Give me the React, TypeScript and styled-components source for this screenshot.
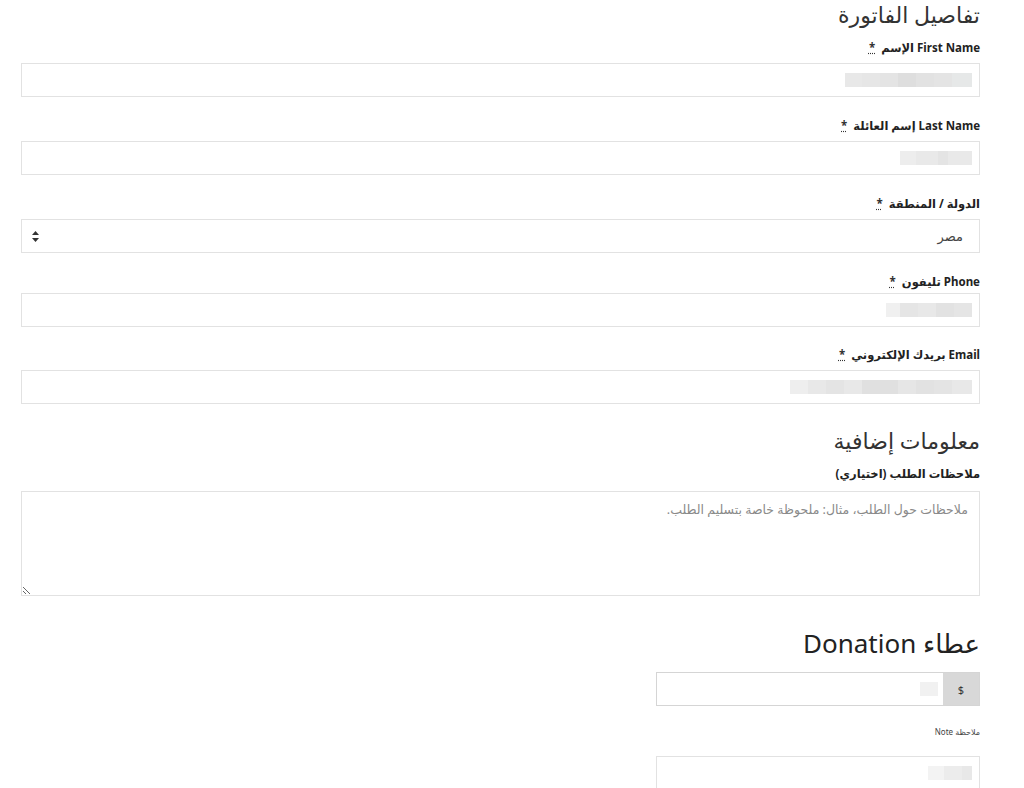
import React from 'react'
import styled, { createGlobalStyle } from 'styled-components'

const GlobalStyle = createGlobalStyle`
  html, body {
    margin: 0;
    padding: 0;
    background: #fff;
  }
  body {
    font-family: 'Noto Sans', 'DejaVu Sans', sans-serif;
    color: #333;
  }
  * { box-sizing: border-box; }
`

const Page = styled.div`
  direction: rtl;
  width: 1024px;
  height: 788px;
  overflow: hidden;
  padding: 0 44px 0 21px;
`

type TitleProps = { big?: boolean, after: number }

const SectionTitle = styled.h3`
  margin: 0 0 ${ (props: TitleProps) => props.after + 'px' };
  font-size: ${ (props: TitleProps) => props.big ? '26px' : '22px' };
  line-height: ${ (props: TitleProps) => props.big ? '38px' : '28px' };
  font-weight: 400;
  color: ${ (props: TitleProps) => props.big ? '#222' : '#333' };
`

const Row = styled.div`
  display: flex;
  flex-direction: column;
  margin-bottom: ${ (props: { gap?: number }) => (props.gap ?? 21) + 'px' };
`

const Label = styled.label`
  display: block;
  font-size: 11.5px;
  line-height: 16px;
  font-weight: 700;
  color: #222;
  margin-bottom: ${ (props: { space?: number }) => (props.space ?? 7) + 'px' };
  abbr {
    text-decoration: underline dotted;
    margin-right: 3px;
    color: #333;
  }
`

const Field = styled.div`
  display: flex;
  align-items: center;
  height: 34px;
  padding: 0 7px;
  border: 1px solid #e2e2e2;
  background: #fff;
  font-size: 13px;
  color: #555;
`

type RedactedProps = { w: number, shade?: string }

const Redacted = styled.span`
  display: inline-block;
  height: 14px;
  width: ${ (props: RedactedProps) => props.w + 'px' };
  background: ${ (props: RedactedProps) => props.shade ?? '#e5e5e5' };
`

const SelectBox = styled(Field)`
  justify-content: space-between;
  padding: 0 16px 0 10px;
  color: #444;
`

const NoteArea = styled.textarea`
  display: block;
  width: 100%;
  height: 105px;
  border: 1px solid #e2e2e2;
  padding: 9px 11px;
  font-family: 'Noto Sans', 'DejaVu Sans', sans-serif;
  font-size: 12.5px;
  direction: rtl;
  resize: vertical;
  outline: none;
  &::placeholder { color: #8a8a8a; }
`

const Narrow = styled.div`
  width: 324px;
`

const Group = styled.div`
  display: flex;
  height: 34px;
  border: 1px solid #d5d5d5;
`

const Addon = styled.span`
  width: 36px;
  display: flex;
  align-items: center;
  justify-content: center;
  background: #d8d8d8;
  font-size: 11px;
  color: #333;
`

const GroupInput = styled.div`
  flex: 1;
  display: flex;
  align-items: center;
  padding: 0 5px;
  background: #fff;
`

const TinyLabel = styled.div`
  font-size: 8px;
  line-height: 12px;
  color: #444;
  margin: 20px 0 18px;
`

const Bars = ({ parts }: { parts: [number, string][] }) => (
  <>
    { parts.map(([w, c], i) => <Redacted key={ i } w={ w } shade={ c } />) }
  </>
)

const Star = () => <abbr title="مطلوب">*</abbr>

export default function App() {
  return (
    <Page>
      <GlobalStyle />
      <SectionTitle after={ 12 }>تفاصيل الفاتورة</SectionTitle>

      <Row>
        <Label>First Name الإسم <Star /></Label>
        <Field>
          <Bars parts={ [[20, '#e6e8e8'], [18, '#e4e4e4'], [18, '#e2e2e2'], [18, '#dedede'], [18, '#e4e4e4'], [18, '#e6e6e6'], [17, '#e8e8e8']] } />
        </Field>
      </Row>

      <Row>
        <Label>Last Name إسم العائلة <Star /></Label>
        <Field>
          <Bars parts={ [[24, '#e9e9e9'], [10, '#e4e4e4'], [22, '#e9e9e9'], [16, '#ededed']] } />
        </Field>
      </Row>

      <Row>
        <Label>الدولة / المنطقة <Star /></Label>
        <SelectBox>
          <span>مصر</span>
          <svg width="7" height="11" viewBox="0 0 7 11">
            <path d="M3.5 0 L7 4 L0 4 Z M3.5 11 L7 7 L0 7 Z" fill="#333" />
          </svg>
        </SelectBox>
      </Row>

      <Row gap={ 20 }>
        <Label space={ 3 }>Phone تليفون <Star /></Label>
        <Field>
          <Bars parts={ [[18, '#e5e5e5'], [18, '#e2e2e2'], [18, '#e8e8e8'], [18, '#e5e5e5'], [14, '#f0f0f0']] } />
        </Field>
      </Row>

      <Row gap={ 22 }>
        <Label>Email بريدك الإلكتروني <Star /></Label>
        <Field>
          <Bars parts={ [[20, '#e8e8e8'], [18, '#e4e4e4'], [18, '#e2e2e2'], [18, '#e6e6e6'], [36, '#e0e0e0'], [18, '#e8e8e8'], [18, '#e4e4e4'], [18, '#e8e8e8'], [18, '#eeeeee']] } />
        </Field>
      </Row>

      <SectionTitle after={ 12 }>معلومات إضافية</SectionTitle>

      <Row gap={ 28 }>
        <Label space={ 9 }>ملاحظات الطلب (اختياري)</Label>
        <NoteArea placeholder="ملاحظات حول الطلب، مثال: ملحوظة خاصة بتسليم الطلب." />
      </Row>

      <SectionTitle big after={ 10 }>عطاء Donation</SectionTitle>

      <Narrow>
        <Group>
          <Addon>$</Addon>
          <GroupInput>
            <Bars parts={ [[18, '#f1f1f1']] } />
          </GroupInput>
        </Group>
        <TinyLabel>ملاحظة Note</TinyLabel>
        <Field>
          <Bars parts={ [[10, '#e8e8e8'], [18, '#ececec'], [16, '#f3f3f3']] } />
        </Field>
      </Narrow>
    </Page>
  )
}
